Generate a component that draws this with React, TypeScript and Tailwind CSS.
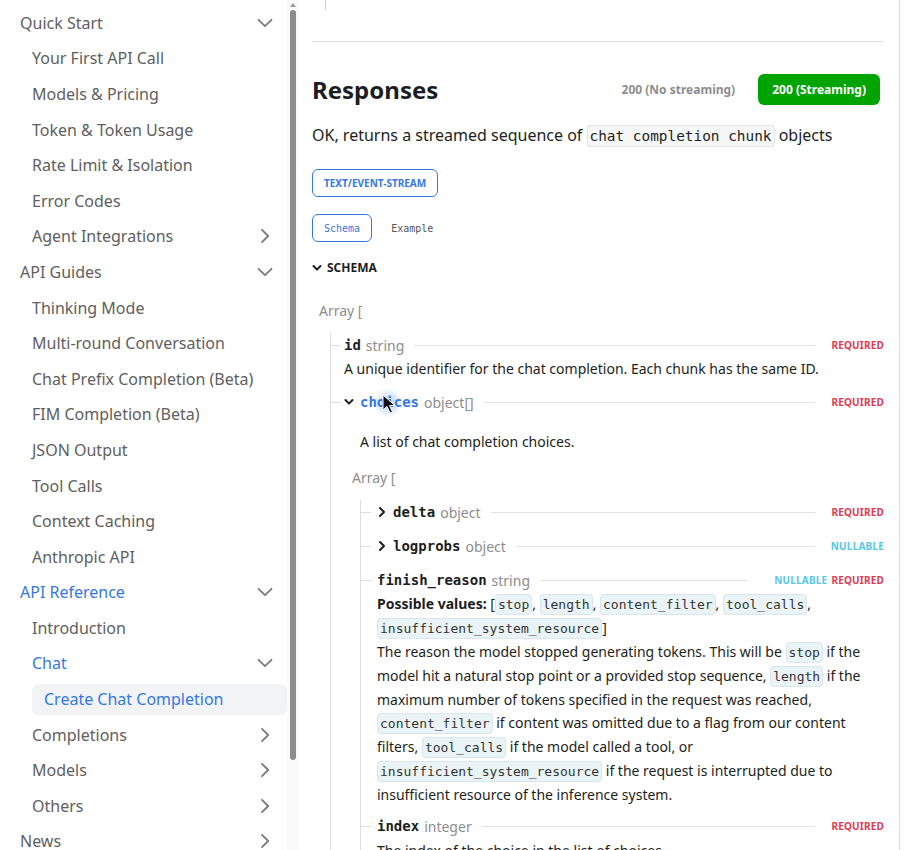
const mono = "font-['DejaVu_Sans_Mono',monospace]"

type NavItem = {
  label: string
  level: 0 | 1 | 2
  chevron?: 'down' | 'right'
  active?: boolean
  selected?: boolean
}

const nav: NavItem[] = [
  { label: 'Quick Start', level: 0, chevron: 'down' },
  { label: 'Your First API Call', level: 1 },
  { label: 'Models & Pricing', level: 1 },
  { label: 'Token & Token Usage', level: 1 },
  { label: 'Rate Limit & Isolation', level: 1 },
  { label: 'Error Codes', level: 1 },
  { label: 'Agent Integrations', level: 1, chevron: 'right' },
  { label: 'API Guides', level: 0, chevron: 'down' },
  { label: 'Thinking Mode', level: 1 },
  { label: 'Multi-round Conversation', level: 1 },
  { label: 'Chat Prefix Completion (Beta)', level: 1 },
  { label: 'FIM Completion (Beta)', level: 1 },
  { label: 'JSON Output', level: 1 },
  { label: 'Tool Calls', level: 1 },
  { label: 'Context Caching', level: 1 },
  { label: 'Anthropic API', level: 1 },
  { label: 'API Reference', level: 0, chevron: 'down', active: true },
  { label: 'Introduction', level: 1 },
  { label: 'Chat', level: 1, chevron: 'down', active: true },
  { label: 'Create Chat Completion', level: 2, active: true, selected: true },
  { label: 'Completions', level: 1, chevron: 'right' },
  { label: 'Models', level: 1, chevron: 'right' },
  { label: 'Others', level: 1, chevron: 'right' },
  { label: 'News', level: 0, chevron: 'right' },
]

function NavChevron({ dir }: { dir: 'down' | 'right' }) {
  if (dir === 'down') {
    return (
      <svg width="16" height="10" viewBox="0 0 16 10" fill="none">
        <path d="M1.5 1.8 L8 8.2 L14.5 1.8" stroke="#7a7a7a" strokeWidth="1.8" strokeLinecap="round" strokeLinejoin="round" />
      </svg>
    )
  }
  return (
    <svg width="16" height="16" viewBox="0 0 16 16" fill="none">
      <path d="M5 1.8 L11.2 8 L5 14.2" stroke="#7a7a7a" strokeWidth="1.8" strokeLinecap="round" strokeLinejoin="round" />
    </svg>
  )
}

function Sidebar() {
  const indent = ['ml-0', 'ml-[12px]', 'ml-[24px]']
  return (
    <aside className="w-[300px] shrink-0 flex h-full">
      <nav className="w-[287px] pl-[8px] pt-[5px]">
        {nav.map((item) => (
          <div key={item.label} className="h-[35.6px] flex items-center">
            <div
              className={`${indent[item.level]} flex-1 h-[31px] flex items-center justify-between pl-3 pr-[14px] rounded-md ${
                item.selected ? 'bg-[#f2f3f5]' : ''
              }`}
            >
              <span className={`text-[16px] ${item.active ? 'text-[#3578e5]' : 'text-[#606060]'}`}>{item.label}</span>
              {item.chevron && <NavChevron dir={item.chevron} />}
            </div>
          </div>
        ))}
      </nav>
      <div className="w-[11px] bg-[#fafafa] flex flex-col items-center pt-[3px]">
        <svg width="6" height="4" viewBox="0 0 6 4">
          <path d="M0 4 L3 0 L6 4 Z" fill="#9a9a9a" />
        </svg>
        <div className="mt-[3px] w-[6px] h-[750px] rounded-full bg-[#8c8c8c]" />
      </div>
    </aside>
  )
}

function Badge({ kind }: { kind: 'REQUIRED' | 'NULLABLE' }) {
  return (
    <span className={`text-[10px] font-bold tracking-[0.2px] ${kind === 'REQUIRED' ? 'text-[#e5384f]' : 'text-[#54c7ec]'}`}>
      {kind}
    </span>
  )
}

function SmallDown() {
  return (
    <svg width="10" height="8" viewBox="0 0 10 8" fill="none">
      <path d="M1.5 2 L5 5.6 L8.5 2" stroke="#1c1e21" strokeWidth="2" strokeLinecap="round" strokeLinejoin="round" />
    </svg>
  )
}

function SmallRight() {
  return (
    <svg width="10" height="12" viewBox="0 0 10 12" fill="none">
      <path d="M3 2 L7 6 L3 10" stroke="#1c1e21" strokeWidth="2" strokeLinecap="round" strokeLinejoin="round" />
    </svg>
  )
}

function FieldRow({
  name,
  type,
  chevron,
  blue,
  badges,
  gap = 'ml-[6px]',
  lineRight = 'mr-[16px]',
}: {
  name: string
  type: string
  chevron?: 'down' | 'right'
  blue?: boolean
  badges: ('REQUIRED' | 'NULLABLE')[]
  gap?: string
  lineRight?: string
}) {
  return (
    <div className="flex items-center h-[24px]">
      <div className="w-[10px] h-px bg-[#dadde1]" />
      {chevron ? (
        <div className={`${gap} w-[10px] flex justify-center`}>{chevron === 'down' ? <SmallDown /> : <SmallRight />}</div>
      ) : null}
      <span className={`${chevron ? 'ml-[6px]' : gap} ${mono} text-[14px] font-bold ${blue ? 'text-[#3578e5]' : 'text-[#1c1e21]'}`}>
        {name}
      </span>
      <span className="ml-[5px] text-[14px] text-[#8d8d8d]">{type}</span>
      <div className={`ml-[10px] ${lineRight} flex-1 h-px bg-[#e3e3e3]`} />
      <div className="flex gap-[4px]">
        {badges.map((b) => (
          <Badge key={b} kind={b} />
        ))}
      </div>
    </div>
  )
}

function Code({ children }: { children: string }) {
  return (
    <code
      className={`${mono} text-[13px] leading-none text-[#333] bg-[#eaf4f7] border border-[#d6e8ee] rounded-[4px] px-[2px] py-[2px]`}
    >
      {children}
    </code>
  )
}

function Cursor() {
  return (
    <div className="absolute left-[382px] top-[394px] pointer-events-none">
      <div className="absolute left-[-9px] top-[-6px] w-[30px] h-[30px] rounded-full bg-[radial-gradient(circle,rgba(53,120,229,0.4)_0%,rgba(53,120,229,0)_70%)]" />
      <svg className="relative" width="14" height="20" viewBox="0 0 14 20">
        <path d="M1 1 L1 16 L5 12.5 L8 19 L10.5 18 L7.5 11.5 L13 11.5 Z" fill="#111" stroke="#fff" strokeWidth="1" />
      </svg>
    </div>
  )
}

function Main() {
  return (
    <main className="w-[600px] shrink-0 h-full border-r border-[#dadde1] pl-[12px] pr-[15px] text-[#1c1e21]">
      <div className="ml-[13px] w-px h-[10px] bg-[#cfcfcf]" />
      <div className="mt-[31px] h-px bg-[#dadde1]" />

      <div className="mt-[32px] h-[31px] flex items-center justify-between">
        <h2 className="text-[24px] font-bold leading-none">Responses</h2>
        <div className="flex items-center h-full mr-[4px]">
          <span className="text-[12px] font-bold text-[#8d8d8d] mr-[23px]">200 (No streaming)</span>
          <span className="h-full flex items-center px-[14px] rounded-md bg-[#00a400] text-white text-[12px] font-bold">
            200 (Streaming)
          </span>
        </div>
      </div>

      <p className="mt-[18px] text-[16px] leading-[24px]">
        OK, returns a streamed sequence of{' '}
        <code
          className={`${mono} text-[14.4px] leading-none bg-[#f6f7f8] border border-[#e3e4e6] rounded-[4px] px-[2px] py-[2px]`}
        >
          chat completion chunk
        </code>{' '}
        objects
      </p>

      <div className="mt-[22px] flex">
        <span className="h-[28px] px-[11px] flex items-center border border-[#3578e5] rounded-md text-[10px] font-bold text-[#3578e5]">
          TEXT/EVENT-STREAM
        </span>
      </div>

      <div className="mt-[17px] flex gap-[8px]">
        <span className={`h-[28px] px-[11px] flex items-center border border-[#3578e5] rounded-md ${mono} text-[10px] text-[#3578e5]`}>
          Schema
        </span>
        <span className={`h-[28px] px-[11px] flex items-center ${mono} text-[10px] text-[#555]`}>Example</span>
      </div>

      <div className="mt-[16px] h-[20px] flex items-center">
        <SmallDown />
        <span className="ml-[5px] text-[12px] font-bold">SCHEMA</span>
      </div>

      <div className="mt-[22px] h-[20px] flex items-center pl-[7px] text-[14px] text-[#8d8d8d]">Array [</div>

      <div className="mt-[13px] ml-[18px] border-l border-[#dadde1] pb-[40px]">
        <FieldRow name="id" type="string" badges={['REQUIRED']} gap="ml-[3px]" />
        <p className="pl-[13px] text-[14px] leading-[24px]">
          A unique identifier for the chat completion. Each chunk has the same ID.
        </p>

        <div className="mt-[9px]">
          <FieldRow name="choices" type="object[]" chevron="down" blue badges={['REQUIRED']} gap="ml-[3px]" />
        </div>
        <p className="mt-[16px] pl-[29px] text-[14px] leading-[24px]">A list of chat completion choices.</p>
        <div className="mt-[13px] h-[20px] flex items-center pl-[21px] text-[14px] text-[#8d8d8d]">Array [</div>

        <div className="mt-[13px] ml-[29px] border-l border-[#dadde1] pb-[40px]">
          <FieldRow name="delta" type="object" chevron="right" badges={['REQUIRED']} />
          <div className="mt-[10px]">
            <FieldRow name="logprobs" type="object" chevron="right" badges={['NULLABLE']} />
          </div>
          <div className="mt-[10px]">
            <FieldRow name="finish_reason" type="string" badges={['NULLABLE', 'REQUIRED']} lineRight="mr-[26px]" />
          </div>
          <div className="pl-[16px] text-[14px] leading-[24px]">
            <p>
              <span className="font-bold">Possible values: </span>[<Code>stop</Code>, <Code>length</Code>,{' '}
              <Code>content_filter</Code>, <Code>tool_calls</Code>, <Code>insufficient_system_resource</Code>]
            </p>
            <p className="leading-[23.8px]">
              The reason the model stopped generating tokens. This will be <Code>stop</Code> if the model hit a natural stop
              point or a provided stop sequence, <Code>length</Code> if the maximum number of tokens specified in the request
              was reached, <Code>content_filter</Code> if content was omitted due to a flag from our content filters,{' '}
              <Code>tool_calls</Code> if the model called a tool, or <Code>insufficient_system_resource</Code> if the request
              is interrupted due to insufficient resource of the inference system.
            </p>
          </div>
          <div className="mt-[8px]">
            <FieldRow name="index" type="integer" badges={['REQUIRED']} />
          </div>
          <p className="pl-[16px] text-[14px] leading-[24px]">The index of the choice in the list of choices.</p>
        </div>
      </div>
    </main>
  )
}

export default function App() {
  return (
    <div className="relative flex w-[920px] h-[850px] overflow-hidden bg-white font-['Noto_Sans',sans-serif]">
      <Sidebar />
      <Main />
      <Cursor />
    </div>
  )
}
